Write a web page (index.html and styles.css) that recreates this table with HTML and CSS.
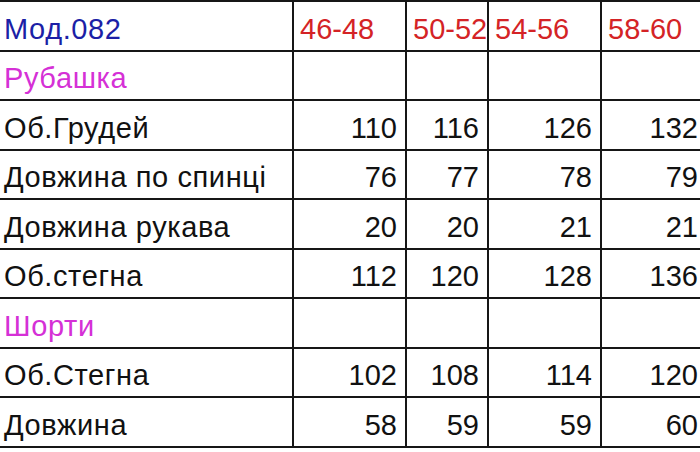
FILE: index.html
```html
<!DOCTYPE html>
<html lang="uk">
<head>
<meta charset="utf-8">
<title>Мод.082</title>
<link rel="stylesheet" href="styles.css">
</head>
<body>
<div class="sheet">
  <div class="cell label model">Мод.082</div>
  <div class="cell size">46-48</div>
  <div class="cell size">50-52</div>
  <div class="cell size">54-56</div>
  <div class="cell size">58-60</div>

  <div class="cell label section">Рубашка</div>
  <div class="cell"></div><div class="cell"></div><div class="cell"></div><div class="cell"></div>

  <div class="cell label">Об.Грудей</div>
  <div class="cell num">110</div><div class="cell num">116</div><div class="cell num">126</div><div class="cell num">132</div>

  <div class="cell label">Довжина по спинці</div>
  <div class="cell num">76</div><div class="cell num">77</div><div class="cell num">78</div><div class="cell num">79</div>

  <div class="cell label">Довжина рукава</div>
  <div class="cell num">20</div><div class="cell num">20</div><div class="cell num">21</div><div class="cell num">21</div>

  <div class="cell label">Об.стегна</div>
  <div class="cell num">112</div><div class="cell num">120</div><div class="cell num">128</div><div class="cell num">136</div>

  <div class="cell label section">Шорти</div>
  <div class="cell"></div><div class="cell"></div><div class="cell"></div><div class="cell"></div>

  <div class="cell label">Об.Стегна</div>
  <div class="cell num">102</div><div class="cell num">108</div><div class="cell num">114</div><div class="cell num">120</div>

  <div class="cell label">Довжина</div>
  <div class="cell num">58</div><div class="cell num">59</div><div class="cell num">59</div><div class="cell num">60</div>
</div>
</body>
</html>
```

FILE: styles.css
```css
html, body {
  margin: 0;
  padding: 0;
  background: #ffffff;
  overflow: hidden;
}

body {
  width: 700px;
  height: 452px;
  font-family: "Liberation Sans", Arial, sans-serif;
  color: #111111;
}

.sheet {
  display: grid;
  grid-template-columns: 292px 111px 80px 111px 104px;
  grid-auto-rows: 47.5px;
  gap: 2px;
  padding: 2px 0 2px 0;
  background: #161616;
  width: max-content;
}

.cell {
  background: #ffffff;
  font-size: 29px;
  line-height: 1;
  display: flex;
  align-items: center;
  padding-top: 7px;
  box-sizing: border-box;
  white-space: nowrap;
  overflow: visible;
}

.label {
  padding-left: 4px;
  letter-spacing: 0.6px;
}

.model {
  color: #1c1fa6;
}

.section {
  color: #d530d6;
}

.size {
  color: #d42326;
  padding-left: 6px;
}

.num {
  justify-content: flex-end;
  padding-right: 8px;
}
```
